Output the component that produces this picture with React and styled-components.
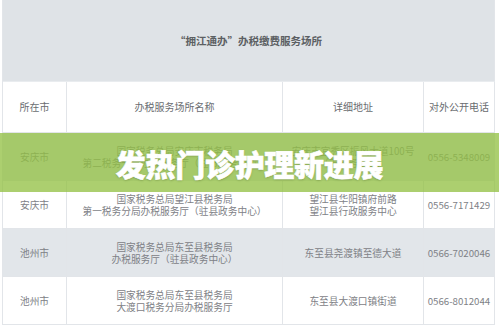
import React from "react";
import styled, { createGlobalStyle } from "styled-components";

const Global = createGlobalStyle`
  html, body {
    margin: 0;
    padding: 0;
    background: #ffffff;
  }
  body {
    font-family: "Noto Sans CJK SC", "Noto Sans", sans-serif;
  }
`;

const Page = styled.div`
  position: relative;
  width: 499px;
  height: 326px;
  padding: 0 5px 0 2px;
  box-sizing: border-box;
  overflow: hidden;
`;

const Table = styled.div`
  display: grid;
  grid-template-columns: 64px 216px 141px 71px;
  border-left: 1px solid #e2e5e9;
`;

const Title = styled.div`
  grid-column: 1 / -1;
  height: 81px;
  display: flex;
  align-items: center;
  justify-content: center;
  background: #dfe3e7;
  border-right: 1px solid #e2e5e9;
  border-bottom: 1px solid #e9ecef;
  font-size: 10.5px;
  font-weight: 700;
  color: #5c5f63;
`;

const Cell = styled.div`
  height: ${(p) => p.$h}px;
  display: flex;
  align-items: center;
  justify-content: center;
  text-align: center;
  background: ${(p) => (p.$shade ? "#e2e6ea" : "#ffffff")};
  border-right: 1px solid #e2e5e9;
  border-bottom: 1px solid #e2e5e9;
  font-size: ${(p) => (p.$head ? "10px" : "9.7px")};
  line-height: 12px;
  color: ${(p) => (p.$head ? "#6a6d71" : "#7e8186")};
  white-space: nowrap;
`;

const Band = styled.div`
  position: absolute;
  left: 0;
  right: 0;
  top: 133px;
  height: 59px;
  background: rgba(146, 192, 66, 0.76);
  display: flex;
  align-items: center;
  justify-content: center;
`;

const BandText = styled.div`
  font-family: "Noto Sans CJK SC", sans-serif;
  font-size: 30px;
  font-weight: 900;
  color: #ffffff;
  letter-spacing: -0.3px;
  -webkit-text-stroke: 0.6px #ffffff;
  text-shadow: 0 1px 2px rgba(60, 80, 30, 0.35);
`;

const headers = ["所在市", "办税服务场所名称", "详细地址", "对外公开电话"];

const rows = [
  {
    city: "安庆市",
    name: ["国家税务总局安庆市税务局", "第二税务分局办税服务厅（驻市政务中心）"],
    addr: ["安庆市宜秀区振风大道100号", "（市政务中心）"],
    phone: "0556-5348009",
  },
  {
    city: "安庆市",
    name: ["国家税务总局望江县税务局", "第一税务分局办税服务厅（驻县政务中心）"],
    addr: ["望江县华阳镇府前路", "望江县行政服务中心"],
    phone: "0556-7171429",
  },
  {
    city: "池州市",
    name: ["国家税务总局东至县税务局", "办税服务厅（驻县政务中心）"],
    addr: ["东至县尧渡镇至德大道"],
    phone: "0566-7020046",
  },
  {
    city: "池州市",
    name: ["国家税务总局东至县税务局", "大渡口税务分局办税服务厅"],
    addr: ["东至县大渡口镇街道"],
    phone: "0566-8012044",
  },
];

function Lines({ items }) {
  return (
    <div>
      {items.map((t) => (
        <div key={t}>{t}</div>
      ))}
    </div>
  );
}

export default function App() {
  return (
    <Page>
      <Global />
      <Table>
        <Title>“拥江通办”办税缴费服务场所</Title>
        {headers.map((h) => (
          <Cell key={h} $head $h={50}>
            {h}
          </Cell>
        ))}
        {rows.map((r, i) => {
          const shade = i % 2 === 0;
          return (
            <React.Fragment key={i}>
              <Cell $shade={shade} $h={47}>{r.city}</Cell>
              <Cell $shade={shade} $h={47}>
                <Lines items={r.name} />
              </Cell>
              <Cell $shade={shade} $h={47}>
                <Lines items={r.addr} />
              </Cell>
              <Cell $shade={shade} $h={47}>{r.phone}</Cell>
            </React.Fragment>
          );
        })}
      </Table>
      <Band>
        <BandText>发热门诊护理新进展</BandText>
      </Band>
    </Page>
  );
}
